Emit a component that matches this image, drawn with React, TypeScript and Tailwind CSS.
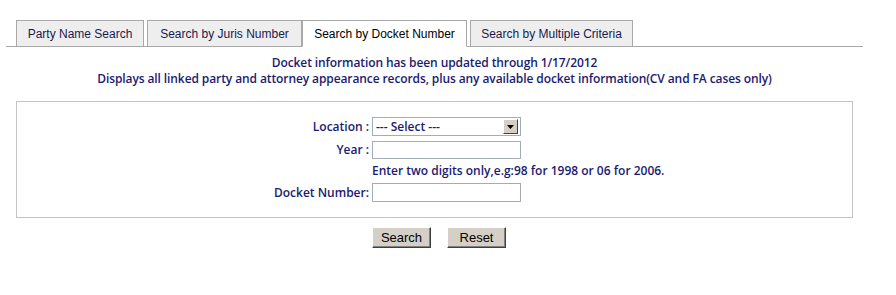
import React from 'react'

const tabs = [
  { label: 'Party Name Search', w: 'w-[128px]', ml: 'ml-[10px]', active: false },
  { label: 'Search by Juris Number', w: 'w-[155px]', ml: 'ml-[3px]', active: false },
  { label: 'Search by Docket Number', w: 'w-[165px]', ml: 'ml-0', active: true },
  { label: 'Search by Multiple Criteria', w: 'w-[163px]', ml: 'ml-[3px]', active: false },
]

const navy = 'text-[#1b1b6f]'

const Tab = ({ label, w, ml, active }: any) => (
  <div
    className={`${w} ${ml} h-[27px] -mb-px flex items-center justify-center text-[12px] font-['Liberation_Sans',Arial,sans-serif] border border-[#a8a8a8] ${
      active ? 'bg-white border-b-white text-black' : 'bg-[#eeeeee] text-[#1a1a4e]'
    }`}
  >
    {label}
  </div>
)

const Row = ({ label, children }: any) => (
  <div className="flex items-center">
    <div className={`w-[355px] text-right pr-[3px] text-[12px] font-semibold ${navy}`}>{label}</div>
    {children}
  </div>
)

const Button = ({ children }: any) => (
  <button className="h-[21px] w-[59px] bg-[#d4d0c8] border border-t-white border-l-white border-r-[#404040] border-b-[#404040] shadow-[inset_-1px_-1px_0_#808080] text-[13px] text-black font-['Liberation_Sans',Arial,sans-serif] leading-none">
    {children}
  </button>
)

export default function App() {
  return (
    <div className="w-[896px] h-[295px] bg-white pt-[20px] font-['Open_Sans',sans-serif]">
      <div className="ml-[6px] w-[857px] flex border-b border-[#a8a8a8]">
        {tabs.map((t) => (
          <Tab key={t.label} {...t} />
        ))}
      </div>

      <div className={`ml-[16px] w-[837px] mt-[8px] text-center text-[12px] leading-[16px] font-semibold ${navy} tracking-[-0.1px]`}>
        <div>Docket information has been updated through 1/17/2012</div>
        <div>Displays all linked party and attorney appearance records, plus any available docket information(CV and FA cases only)</div>
      </div>

      <div className="ml-[16px] w-[837px] h-[117px] mt-[14px] border border-[#c4c4c4] pt-[15px] flex flex-col gap-[5px]">
        <Row label="Location :">
          <div className="w-[149px] h-[19px] border border-[#a5acb5] flex items-center justify-between pl-[3px] pr-[2px] bg-white">
            <span className={`text-[12px] font-semibold ${navy}`}>--- Select ---</span>
            <span className="w-[15px] h-[15px] bg-[#d4d0c8] border border-t-white border-l-white border-r-[#404040] border-b-[#404040] flex items-center justify-center">
              <svg width="7" height="4" viewBox="0 0 7 4"><path d="M0 0H7L3.5 4Z" fill="#000" /></svg>
            </span>
          </div>
        </Row>
        <Row label="Year :">
          <div className="w-[149px] h-[18px] border border-[#a5acb5] bg-white" />
        </Row>
        <div className={`pl-[355px] text-[12px] font-semibold ${navy} leading-[14px]`}>
          Enter two digits only,e.g:98 for 1998 or 06 for 2006.
        </div>
        <Row label="Docket Number:">
          <div className="w-[149px] h-[19px] border border-[#a5acb5] bg-white" />
        </Row>
      </div>

      <div className="flex gap-[16px] mt-[9px] ml-[372px]">
        <Button>Search</Button>
        <Button>Reset</Button>
      </div>
    </div>
  )
}
